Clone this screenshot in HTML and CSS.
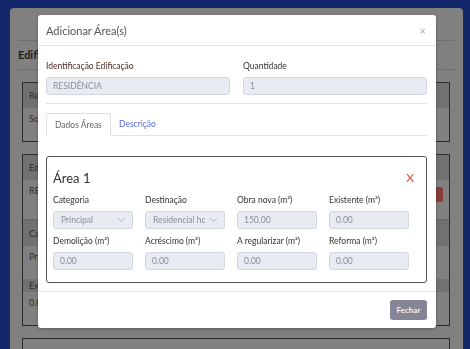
FILE: index.html
```html
<!DOCTYPE html>
<html lang="pt-BR">
<head>
    <meta charset="UTF-8">
    <meta name="viewport" content="width=device-width, initial-scale=1.0">
    <title>Adicionar Área(s)</title>
    <link rel="stylesheet" href="styles.css">
</head>
<body>
    <div class="page">
        <div class="card">
            <div class="card-top"></div>
            <div class="card-title">Edificações</div>
            <div class="table-box">
                <div class="row-head">Responsável</div>
                <div class="row-body">Solicitante</div>
            </div>
            <div class="table-box">
                <div class="row-head">Edificação</div>
                <div class="row-body tall">RESIDÊNCIA <span class="btn-del"></span></div>
                <div class="row-head split">Categoria</div>
                <div class="row-body">Principal</div>
                <div class="row-head small">Existente</div>
                <div class="row-body">0.00</div>
            </div>
            <div class="table-box last"></div>
        </div>
    </div>

    <div class="modal">
        <div class="modal-header">
            <span class="modal-title">Adicionar Área(s)</span>
            <span class="modal-close">×</span>
        </div>
        <div class="modal-body">
            <div class="form-row">
                <div class="field">
                    <label class="label label-accent">Identificação Edificação</label>
                    <div class="input">RESIDÊNCIA</div>
                </div>
                <div class="field">
                    <label class="label">Quantidade</label>
                    <div class="input">1</div>
                </div>
            </div>

            <ul class="tabs">
                <li class="tab active">Dados Áreas</li>
                <li class="tab link">Descrição</li>
            </ul>

            <div class="area-box">
                <div class="area-head">
                    <h3>Área 1</h3>
                    <span class="area-remove">X</span>
                </div>
                <div class="area-grid">
                    <div class="field">
                        <label class="label">Categoria</label>
                        <div class="input select">Principal
                            <svg width="9" height="6" viewBox="0 0 9 6"><path d="M1 1l3.5 3.5L8 1" fill="none" stroke="#b4b8c4" stroke-width="1"/></svg>
                        </div>
                    </div>
                    <div class="field">
                        <label class="label">Destinação</label>
                        <div class="input select"><span class="clip">Residencial horizontal</span>
                            <svg width="9" height="6" viewBox="0 0 9 6"><path d="M1 1l3.5 3.5L8 1" fill="none" stroke="#b4b8c4" stroke-width="1"/></svg>
                        </div>
                    </div>
                    <div class="field">
                        <label class="label">Obra nova (m²)</label>
                        <div class="input">150.00</div>
                    </div>
                    <div class="field">
                        <label class="label">Existente (m²)</label>
                        <div class="input">0.00</div>
                    </div>
                    <div class="field">
                        <label class="label">Demolição (m²)</label>
                        <div class="input">0.00</div>
                    </div>
                    <div class="field">
                        <label class="label">Acréscimo (m²)</label>
                        <div class="input">0.00</div>
                    </div>
                    <div class="field">
                        <label class="label">A regularizar (m²)</label>
                        <div class="input">0.00</div>
                    </div>
                    <div class="field">
                        <label class="label">Reforma (m²)</label>
                        <div class="input">0.00</div>
                    </div>
                </div>
            </div>
        </div>
        <div class="modal-footer">
            <button class="btn">Fechar</button>
        </div>
    </div>
</body>
</html>
```

FILE: styles.css
```css
body {
    margin: 0;
    background-color: #13286b;
    font-family: Lato, "Open Sans", sans-serif;
    overflow: hidden;
    height: 349px;
}
.page {
    padding: 8px 7px 0 10px;
}
.card {
    background-color: #808080;
    border-radius: 4px;
    padding: 0 8px;
    height: 360px;
}
.card-top {
    height: 32px;
    border-bottom: 1px solid #6e6e6e;
}
.card-title {
    font-size: 11px;
    font-weight: bold;
    color: #1e1e1e;
    padding: 8px 0;
    border-bottom: 1px solid #6e6e6e;
    line-height: 12px;
}
.table-box {
    margin: 12px 5px 0 4px;
    border: 1px solid #2a2a2a;
    font-size: 9px;
    color: #2e2e2e;
}
.row-head {
    background-color: #717171;
    height: 25px;
    line-height: 25px;
    padding-left: 6px;
}
.row-head.split {
    border-top: 2px solid #6a6a6a;
}
.row-head.small {
    height: 13px;
    line-height: 13px;
}
.row-body {
    height: 33px;
    line-height: 22px;
    padding-left: 6px;
    position: relative;
    color: #2e2e2e;
}
.row-body.tall {
    height: 39px;
}
.btn-del {
    position: absolute;
    right: 6px;
    top: 7px;
    width: 16px;
    height: 15px;
    background-color: #8a3c38;
    border-radius: 2px;
}
.table-box.last {
    height: 20px;
}

/* modal */
.modal {
    position: fixed;
    left: 38px;
    top: 15px;
    width: 398px;
    height: 313px;
    background: white;
    border-radius: 3px;
    box-shadow: 0 1px 3px rgba(0,0,0,0.3);
    display: flex;
    flex-direction: column;
}
.modal-header {
    height: 30px;
    border-bottom: 1px solid #e2e2e8;
    display: flex;
    align-items: center;
    justify-content: space-between;
    padding: 0 9px 0 8px;
}
.modal-title {
    font-size: 11px;
    color: #555;
}
.modal-close {
    font-size: 11px;
    color: #b5aaa2;
    padding-right: 1px;
}
.modal-body {
    flex: 1;
    padding: 0 9px 0 8px;
}
.form-row {
    display: grid;
    grid-template-columns: 1fr 1fr;
    gap: 13px;
    padding: 14px 0 8px;
    border-bottom: 1px solid #e2e2e8;
}
.label {
    display: block;
    font-size: 8.5px;
    color: #333;
    height: 13px;
    line-height: 13px;
    margin-bottom: 4px;
}
.label-accent {
    color: #4a2a22;
}
.input {
    height: 16px;
    line-height: 16px;
    background-color: #e9ebf2;
    border: 1px solid #d4d7e2;
    border-radius: 3px;
    font-size: 8.5px;
    color: #8a8e9c;
    padding-left: 6px;
    white-space: nowrap;
    overflow: hidden;
}
.select {
    display: flex;
    align-items: center;
    justify-content: space-between;
    padding: 0 6px 0 7px;
}
.clip {
    overflow: hidden;
    width: 52px;
}
.tabs {
    list-style: none;
    margin: 9px 0 0;
    padding: 0;
    display: flex;
    border-bottom: 1px solid #e2e2e8;
}
.tab {
    font-size: 8.5px;
    height: 22px;
    line-height: 22px;
    padding: 0 7px;
    color: #666;
}
.tab.active {
    border: 1px solid #e0e0e6;
    border-bottom: none;
    border-radius: 3px 3px 0 0;
    margin-bottom: -1px;
    background: white;
    height: 22px;
    padding: 0 8px 0;
    width: 47px;
}
.tab.link {
    color: #5b6cd4;
    padding-left: 8px;
}
.area-box {
    margin-top: 20px;
    border: 1px solid #555;
    border-radius: 3px;
    padding: 0 12px 12px 6px;
}
.area-head {
    display: flex;
    align-items: center;
    justify-content: space-between;
    height: 33px;
    padding-top: 4px;
}
.area-head h3 {
    margin: 0;
    font-size: 13px;
    font-weight: normal;
    color: #333;
}
.area-remove {
    color: #e5453a;
    font-size: 12px;
}
.area-grid {
    display: grid;
    grid-template-columns: repeat(4, 80px);
    column-gap: 12px;
    row-gap: 6px;
}
.modal-footer {
    height: 36px;
    border-top: 1px solid #e2e2e8;
    display: flex;
    align-items: center;
    justify-content: flex-end;
    padding-right: 9px;
}
.btn {
    background-color: #858596;
    color: #f4f4f4;
    border: none;
    border-radius: 3px;
    width: 37px;
    height: 20px;
    font-family: Lato, sans-serif;
    font-size: 8px;
    font-weight: bold;
    padding: 0;
}
```
